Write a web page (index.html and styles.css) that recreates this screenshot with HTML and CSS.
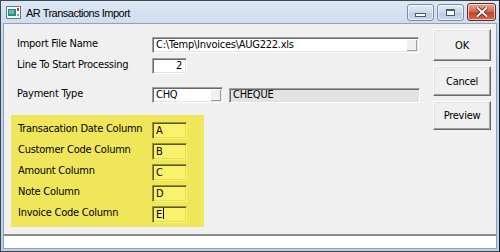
FILE: index.html
```html
<!DOCTYPE html>
<html lang="en">
<head>
  <meta charset="UTF-8">
  <title>AR Transactions Import</title>
  <link rel="stylesheet" href="styles.css">
</head>
<body>
  <div class="window">
    <div class="titlebar">
      <svg class="app-icon" width="15" height="13" viewBox="0 0 15 13">
        <rect x="0.5" y="0.5" width="14" height="12" fill="#f4f6f8" stroke="#6c7a88"/>
        <rect x="2" y="3" width="8" height="7" fill="#2f8f6a"/>
        <rect x="3" y="4" width="5" height="4" fill="#5cb8d8"/>
        <rect x="11" y="2" width="2" height="3" fill="#d23a2a"/>
        <rect x="11" y="8" width="2" height="2" fill="#8a9aa8"/>
      </svg>
      <span class="title">AR Transactions Import</span>
      <div class="caption-btns">
        <div class="cap-btn">
          <span class="glyph-min"></span>
        </div>
        <div class="cap-btn">
          <span class="glyph-max"></span>
        </div>
        <div class="cap-btn close">
          <svg width="12" height="10" viewBox="0 0 12 10">
            <path d="M1.5 1 L10.5 9 M10.5 1 L1.5 9" stroke="#5a1a10" stroke-width="3.4" stroke-linecap="square"/>
            <path d="M1.5 1 L10.5 9 M10.5 1 L1.5 9" stroke="#fff" stroke-width="2" stroke-linecap="square"/>
          </svg>
        </div>
      </div>
    </div>

    <div class="client">
      <div class="main">
        <div class="form">
          <div class="row row-file">
            <label class="lbl">Import File Name</label>
            <div class="field wide">
              <span class="val">C:\Temp\Invoices\AUG222.xls</span>
              <span class="pick"></span>
            </div>
          </div>
          <div class="row row-line">
            <label class="lbl">Line To Start Processing</label>
            <div class="field small num"><span class="val">2</span></div>
          </div>
          <div class="row row-pay">
            <label class="lbl">Payment Type</label>
            <div class="field code">
              <span class="val">CHQ</span>
              <span class="pick"></span>
            </div>
            <div class="field desc"><span class="val">CHEQUE</span></div>
          </div>

          <div class="highlight">
            <div class="hrow">
              <label class="lbl">Transacation Date Column</label>
              <div class="field col"><span class="val">A</span></div>
            </div>
            <div class="hrow">
              <label class="lbl">Customer Code Column</label>
              <div class="field col"><span class="val">B</span></div>
            </div>
            <div class="hrow">
              <label class="lbl">Amount Column</label>
              <div class="field col"><span class="val">C</span></div>
            </div>
            <div class="hrow">
              <label class="lbl">Note Column</label>
              <div class="field col"><span class="val">D</span></div>
            </div>
            <div class="hrow">
              <label class="lbl">Invoice Code Column</label>
              <div class="field col"><span class="val">E<span class="caret"></span></span></div>
            </div>
          </div>
        </div>

        <div class="actions">
          <button class="btn btn-ok">OK</button>
          <button class="btn btn-cancel">Cancel</button>
          <button class="btn btn-preview">Preview</button>
        </div>
      </div>
      <div class="status"></div>
    </div>
  </div>
</body>
</html>
```

FILE: styles.css
```css
html, body {
  margin: 0;
  padding: 0;
  background: #ffffff;
}
.window {
  width: 500px;
  height: 252px;
  box-sizing: border-box;
  display: flex;
  flex-direction: column;
  background: linear-gradient(#dce7f4, #c4d5e9 40px, #bcd0e6);
  border: 1px solid #3d4651;
  border-right: 1px solid #102030;
  padding: 0 2px 2px 2px;
  font-family: "Liberation Sans", Arial, sans-serif;
}
.titlebar {
  height: 22px;
  display: flex;
  align-items: center;
  position: relative;
}
.app-icon {
  margin: 1px 0 0 3px;
}
.title {
  margin-left: 5px;
  margin-top: 1px;
  font-size: 11px;
  letter-spacing: -0.5px;
  color: #000;
}
.caption-btns {
  margin-left: auto;
  display: flex;
  gap: 3px;
  align-self: flex-start;
  margin-top: 3px;
  margin-right: 1px;
}
.cap-btn {
  width: 25px;
  height: 15px;
  border: 1px solid #7a8ea8;
  border-radius: 3px;
  background: linear-gradient(#e4edf7, #c9d8ea 50%, #b9cce2 51%, #c7d8ec);
  display: flex;
  align-items: center;
  justify-content: center;
  box-shadow: inset 0 0 0 1px rgba(255,255,255,0.6);
}
.cap-btn.close {
  width: 27px;
  height: 16px;
  margin-top: -1px;
  border-color: #6b2a1c;
  background: linear-gradient(#e8a797, #d36e55 45%, #c0462a 55%, #d4684c);
}
.glyph-min {
  width: 9px;
  height: 2px;
  margin-top: 4px;
  background: #fff;
  border: 1px solid #4a5870;
}
.glyph-max {
  width: 7px;
  height: 4px;
  border: 1px solid #4a5870;
  border-top-width: 2px;
  background: #fff;
  box-shadow: inset 0 0 0 1px #fff;
}
.client {
  flex: 1;
  display: flex;
  flex-direction: column;
  background: #f0f0f0;
  border: 1px solid #8ea2bb;
  color: #000;
  font-family: "DejaVu Sans Condensed", "Liberation Sans", Arial, sans-serif;
  font-size: 11px;
  letter-spacing: -0.25px;
}
.main {
  flex: 1;
  display: flex;
}
.form {
  width: 419px;
  padding: 13px 0 0 6px;
}
.lbl {
  display: block;
}
.row {
  display: flex;
  align-items: center;
}
.row .lbl {
  width: 135px;
  padding-left: 7px;
  margin-top: -4px;
}
.row-line {
  margin-top: 5px;
}
.row-pay {
  margin-top: 13px;
}
.field {
  position: relative;
  box-sizing: border-box;
  height: 16px;
  background: #fff;
  border: 1px solid;
  border-color: #a0a0a0 #fff #fff #a0a0a0;
  box-shadow: inset 1px 1px 0 #696969, inset -1px -1px 0 #e3e3e3;
  display: flex;
  align-items: center;
}
.val {
  padding-left: 3px;
  line-height: 12px;
  white-space: nowrap;
}
.wide {
  width: 267px;
}
.small {
  width: 35px;
}
.num {
  justify-content: flex-end;
}
.num .val {
  padding-right: 4px;
}
.code {
  width: 71px;
}
.desc {
  width: 191px;
  margin-left: 6px;
  background: #e2e2e2;
  height: 15px;
}
.pick {
  position: absolute;
  right: 1px;
  top: 1px;
  bottom: 1px;
  width: 11px;
  background: #f0f0f0;
  border-left: 1px solid #fff;
  border-top: 1px solid #fff;
  box-shadow: inset -1px -1px 0 #a0a0a0;
  box-sizing: border-box;
}
.highlight {
  width: 193px;
  height: 112px;
  box-sizing: border-box;
  margin-top: 12px;
  margin-left: 1px;
  background: #f0e65a;
  padding: 7px 0 0 0;
  display: flex;
  flex-direction: column;
  gap: 4px;
}
.hrow {
  display: flex;
  align-items: center;
  height: 17px;
}
.hrow .lbl {
  width: 134px;
  padding-left: 7px;
  margin-top: -5px;
}
.col {
  width: 35px;
  height: 17px;
  background: #fbf26c;
  border-color: #9a9430 #fbf26c #fbf26c #9a9430;
  box-shadow: inset 1px 1px 0 #5a5620, inset -1px -1px 0 #e8de58;
  align-items: flex-end;
  padding-bottom: 1px;
}
.caret {
  display: inline-block;
  width: 1px;
  height: 11px;
  background: #000;
  margin-left: 1px;
  vertical-align: -1px;
}
.actions {
  display: flex;
  flex-direction: column;
  gap: 5px;
  padding-top: 5px;
  margin-left: 4px;
}
.btn {
  width: 58px;
  box-sizing: border-box;
  font-family: "DejaVu Sans Condensed", "Liberation Sans", Arial, sans-serif;
  font-size: 11px;
  letter-spacing: -0.25px;
  color: #000;
  background: #f0f0f0;
  border: 1px solid;
  border-color: #fff #696969 #696969 #fff;
  box-shadow: inset -1px -1px 0 #a0a0a0, inset 1px 1px 0 #e3e3e3;
  padding: 0;
}
.btn-ok {
  height: 32px;
}
.btn-cancel {
  height: 30px;
}
.btn-preview {
  height: 29px;
}
.status {
  height: 12px;
  background: #fff;
  border-top: 2px solid #8c8c8c;
  margin-bottom: 0;
}
```
